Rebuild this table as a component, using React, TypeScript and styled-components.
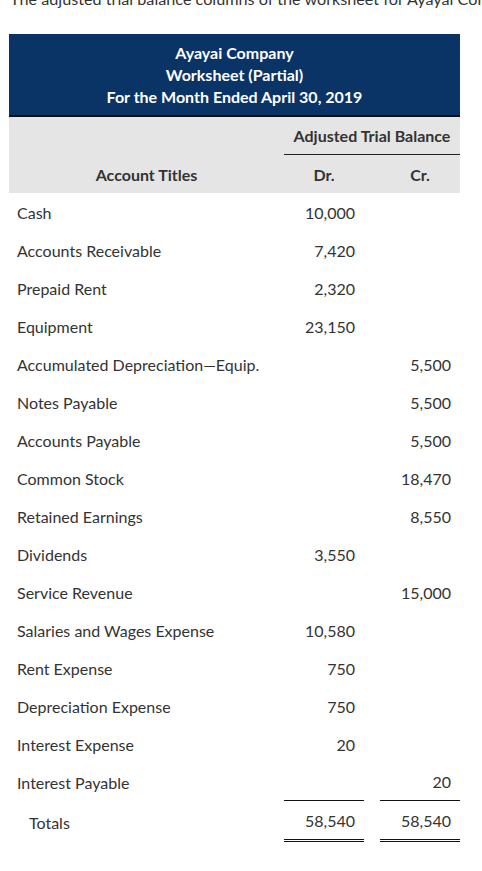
import React from 'react';
import styled, { createGlobalStyle } from 'styled-components';

const GlobalStyle = createGlobalStyle`
    body {
        margin: 0;
        background: #fff;
        font-family: Lato, "Noto Sans", sans-serif;
        color: #333;
    }
`;

const Page = styled.div`
    width: 482px;
    overflow: hidden;
`;

const Intro = styled.p`
    margin: -12px 0 0 10px;
    font-size: 16.2px;
    line-height: 22px;
    white-space: nowrap;
    color: #333;
`;

const Sheet = styled.div`
    margin: 24px 0 0 9px;
    width: 451px;
`;

const TitleBox = styled.div`
    background: #0b3466;
    color: #fff;
    font-weight: 700;
    font-size: 16px;
    line-height: 22px;
    text-align: center;
    padding: 8px 0;
    height: 83px;
    box-sizing: border-box;
    border-bottom: 2px solid #111;
`;

const Grid = styled.div`
    display: grid;
    grid-template-columns: 275px 80px 16px 80px;
`;

const HeadGrid = styled(Grid)`
    background: #e5e5e5;
    grid-template-rows: 38px 38px;
    font-weight: 700;
    font-size: 16px;
`;

const GroupHead = styled.div`
    grid-column: 2 / 5;
    grid-row: 1;
    display: flex;
    align-items: center;
    justify-content: center;
    border-bottom: 1px solid #222;
`;

const TitlesHead = styled.div`
    grid-column: 1;
    grid-row: 1 / 3;
    display: flex;
    align-items: center;
    justify-content: center;
    padding-top: 38px;
`;

const ColHead = styled.div<{ $col: number }>`
    grid-row: 2;
    grid-column: ${(p) => p.$col};
    display: flex;
    align-items: center;
    justify-content: center;
`;

const Row = styled(Grid)<{ $total?: boolean }>`
    height: ${(p) => (p.$total ? '41px' : '38px')};
    padding-top: ${(p) => (p.$total ? '1px' : '0')};
    box-sizing: border-box;
    font-size: 16px;
`;

const Title = styled.div<{ $indent?: boolean }>`
    grid-column: 1;
    display: flex;
    align-items: center;
    padding-left: ${(p) => (p.$indent ? '20px' : '8px')};
`;

const Amount = styled.div<{ $col: number; $rule?: 'single' | 'double' }>`
    grid-column: ${(p) => p.$col};
    display: flex;
    align-items: center;
    justify-content: flex-end;
    padding-right: 9px;
    box-sizing: border-box;
    border-bottom: ${(p) =>
        p.$rule === 'single' ? '1px solid #111' : p.$rule === 'double' ? '3px double #111' : 'none'};
`;

const accounts: [string, string, string][] = [
    ['Cash', '10,000', ''],
    ['Accounts Receivable', '7,420', ''],
    ['Prepaid Rent', '2,320', ''],
    ['Equipment', '23,150', ''],
    ['Accumulated Depreciation\u2014Equip.', '', '5,500'],
    ['Notes Payable', '', '5,500'],
    ['Accounts Payable', '', '5,500'],
    ['Common Stock', '', '18,470'],
    ['Retained Earnings', '', '8,550'],
    ['Dividends', '3,550', ''],
    ['Service Revenue', '', '15,000'],
    ['Salaries and Wages Expense', '10,580', ''],
    ['Rent Expense', '750', ''],
    ['Depreciation Expense', '750', ''],
    ['Interest Expense', '20', ''],
    ['Interest Payable', '', '20'],
];

const App: React.FC = () => {
    return (
        <Page>
            <GlobalStyle />
            <Intro>The adjusted trial balance columns of the worksheet for Ayayai Company are as follows.</Intro>
            <Sheet>
                <TitleBox>
                    <div>Ayayai Company</div>
                    <div>Worksheet (Partial)</div>
                    <div>For the Month Ended April 30, 2019</div>
                </TitleBox>
                <HeadGrid>
                    <GroupHead>Adjusted Trial Balance</GroupHead>
                    <TitlesHead>Account Titles</TitlesHead>
                    <ColHead $col={2}>Dr.</ColHead>
                    <ColHead $col={4}>Cr.</ColHead>
                </HeadGrid>
                {accounts.map(([name, dr, cr], i) => {
                    const rule = i === accounts.length - 1 ? 'single' : undefined;
                    return (
                        <Row key={name}>
                            <Title>{name}</Title>
                            <Amount $col={2} $rule={rule}>{dr}</Amount>
                            <Amount $col={4} $rule={rule}>{cr}</Amount>
                        </Row>
                    );
                })}
                <Row $total>
                    <Title $indent>Totals</Title>
                    <Amount $col={2} $rule="double">58,540</Amount>
                    <Amount $col={4} $rule="double">58,540</Amount>
                </Row>
            </Sheet>
        </Page>
    );
};

export default App;
